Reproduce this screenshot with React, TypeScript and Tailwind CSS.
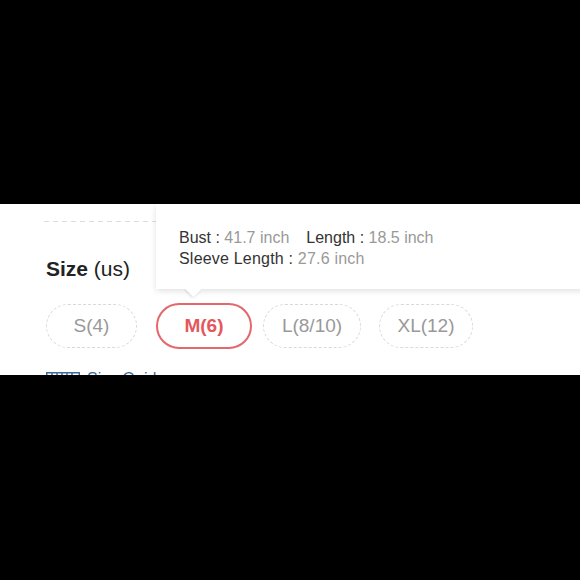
const SIZES = [
  { label: 'S(4)', width: 'w-[91px]', gap: '' },
  { label: 'M(6)', width: 'w-[96px]', gap: 'ml-[19px]', active: true },
  { label: 'L(8/10)', width: 'w-[98px]', gap: 'ml-[11px]' },
  { label: 'XL(12)', width: 'w-[94px]', gap: 'ml-[18px]' },
]

function RulerIcon() {
  return (
    <svg width="34" height="14" viewBox="0 0 34 14" fill="none" stroke="#3f6a9c" strokeWidth="1.5">
      <rect x="0.75" y="0.75" width="32.5" height="12.5" />
      <path d="M6 1v5M11 1v3.5M16 1v5M21 1v3.5M26 1v5" />
    </svg>
  )
}

function SizeTooltip() {
  return (
    <div className="absolute top-0 left-[156px] right-[-12px] h-[85px] bg-white shadow-[0_2px_6px_rgba(0,0,0,0.12)]">
      <div className="pt-[23px] pl-[23px] text-[16px] leading-[21px]">
        <div className="flex gap-[17px]">
          <span>
            <span className="text-[#333]">Bust : </span>
            <span className="text-[#999]">41.7 inch</span>
          </span>
          <span>
            <span className="text-[#333]">Length : </span>
            <span className="text-[#999]">18.5 inch</span>
          </span>
        </div>
        <div className="tracking-[0.2px]">
          <span className="text-[#333]">Sleeve Length : </span>
          <span className="text-[#999]">27.6 inch</span>
        </div>
      </div>
      {/* arrow, clipped so only the lower half shows */}
      <div className="absolute top-[85px] left-[23px] h-[10px] w-[28px] overflow-hidden">
        <div className="ml-[8.5px] mt-[-5.5px] h-[11px] w-[11px] rotate-45 bg-white shadow-[0_1px_3px_rgba(0,0,0,0.15)]" />
      </div>
    </div>
  )
}

export default function App() {
  return (
    <div className="min-h-[580px] bg-black pt-[204px]">
      <div className="relative h-[171px] overflow-hidden bg-white font-['Liberation_Sans',Arial,sans-serif]">
        <div className="ml-[44px] mt-[17px] h-px bg-[repeating-linear-gradient(90deg,#dcdcdc_0_5px,transparent_5px_9px)]" />

        <h3 className="ml-[46px] mt-[35px] text-[21px] leading-[24px] text-[#222]">
          <span className="font-bold">Size</span> (us)
        </h3>

        <div className="ml-[46px] mt-[22px] flex h-[46px] items-center">
          {SIZES.map((size) =>
            size.active ? (
              <div
                key={size.label}
                className={`${size.gap} ${size.width} flex h-[46px] items-center justify-center rounded-full border-[2.5px] border-[#e4676b] text-[19px] font-bold text-[#e4575c]`}
              >
                {size.label}
              </div>
            ) : (
              <div
                key={size.label}
                className={`${size.gap} ${size.width} flex h-[44px] items-center justify-center rounded-full border border-dashed border-[#d9d9d9] text-[19px] text-[#999]`}
              >
                {size.label}
              </div>
            ),
          )}
        </div>

        <div className="ml-[46px] mt-[20px] flex items-start gap-[7px] text-[16px] leading-[20px] text-[#3f6a9c]">
          <span className="mt-[3px] block">
            <RulerIcon />
          </span>
          <span>Size Guide</span>
        </div>

        <SizeTooltip />
      </div>
    </div>
  )
}
